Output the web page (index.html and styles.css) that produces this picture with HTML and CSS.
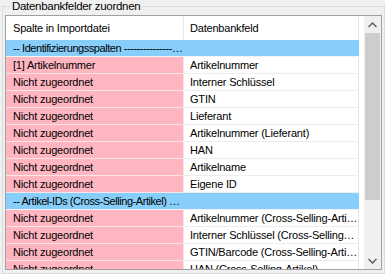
FILE: index.html
```html
<!DOCTYPE html>
<html lang="de">
<head>
    <meta charset="UTF-8">
    <title>Datenbankfelder zuordnen</title>
    <link rel="stylesheet" href="styles.css">
</head>
<body>
    <fieldset class="gruppe">
        <legend>Datenbankfelder zuordnen</legend>
        <div class="raster">
            <div class="tabelle-box">
                <table>
                    <thead>
                        <tr>
                            <th>Spalte in Importdatei</th>
                            <th>Datenbankfeld</th>
                        </tr>
                    </thead>
                    <tbody>
                        <tr class="abschnitt"><td>-- Identifizierungsspalten ----------------------------------------</td><td></td></tr>
                        <tr><td class="quelle">[1] Artikelnummer</td><td>Artikelnummer</td></tr>
                        <tr><td class="quelle">Nicht zugeordnet</td><td>Interner Schlüssel</td></tr>
                        <tr><td class="quelle">Nicht zugeordnet</td><td>GTIN</td></tr>
                        <tr><td class="quelle">Nicht zugeordnet</td><td>Lieferant</td></tr>
                        <tr><td class="quelle">Nicht zugeordnet</td><td>Artikelnummer (Lieferant)</td></tr>
                        <tr><td class="quelle">Nicht zugeordnet</td><td>HAN</td></tr>
                        <tr><td class="quelle">Nicht zugeordnet</td><td>Artikelname</td></tr>
                        <tr><td class="quelle">Nicht zugeordnet</td><td>Eigene ID</td></tr>
                        <tr class="abschnitt"><td>-- Artikel-IDs (Cross-Selling-Artikel) --------------------------</td><td></td></tr>
                        <tr><td class="quelle">Nicht zugeordnet</td><td>Artikelnummer (Cross-Selling-Artikel)</td></tr>
                        <tr><td class="quelle">Nicht zugeordnet</td><td>Interner Schlüssel (Cross-Selling-Artikel)</td></tr>
                        <tr><td class="quelle">Nicht zugeordnet</td><td>GTIN/Barcode (Cross-Selling-Artikel)</td></tr>
                        <tr><td class="quelle">Nicht zugeordnet</td><td>HAN (Cross-Selling-Artikel)</td></tr>
                    </tbody>
                </table>
            </div>
            <div class="scrollleiste">
                <div class="pfeil">
                    <svg width="9" height="6" viewBox="0 0 9 6"><path d="M0.5 5 L4.5 1 L8.5 5" fill="none" stroke="#606060" stroke-width="1.5"/></svg>
                </div>
                <div class="spur">
                    <div class="daumen"></div>
                </div>
                <div class="pfeil">
                    <svg width="9" height="6" viewBox="0 0 9 6"><path d="M0.5 1 L4.5 5 L8.5 1" fill="none" stroke="#606060" stroke-width="1.5"/></svg>
                </div>
            </div>
        </div>
    </fieldset>
</body>
</html>
```

FILE: styles.css
```css
body {
    font-family: "Liberation Sans", Arial, sans-serif;
    font-size: 11px;
    letter-spacing: -0.2px;
    background-color: #f0f0f0;
    color: #000;
    margin: 0;
    padding: 0;
    overflow: hidden;
}
.gruppe {
    margin: 0 1px 0 2px;
    padding: 3px 2px 3px 2px;
    border: 1px solid #dcdcdc;
    border-radius: 0;
}
.gruppe legend {
    padding: 0 2px;
    margin-left: 5px;
    font-size: 11.5px;
    letter-spacing: -0.3px;
    line-height: 12px;
}
.raster {
    display: flex;
    height: 253px;
    border: 1px solid #a0a0a0;
    background-color: #fff;
    overflow: hidden;
}
.tabelle-box {
    flex: 1;
    overflow: hidden;
}
table {
    width: 353px;
    table-layout: fixed;
    border-collapse: collapse;
}
th, td {
    padding: 0 0 0 7px;
    text-align: left;
    font-weight: normal;
    white-space: nowrap;
    overflow: hidden;
    text-overflow: ellipsis;
    border-right: 1px solid #e6e6e6;
    border-bottom: 1px solid #ededed;
    height: 16px;
    line-height: 16px;
}
th {
    height: 24px;
    line-height: 24px;
    border-bottom: 0;
}
th:first-child, td:first-child {
    width: 170px;
}
td + td, th + th {
    padding-left: 6px;
}
.quelle {
    background-color: #ffb6c1;
    border-bottom-color: #fbe4e8;
    border-right-color: #fbe4e8;
}
.abschnitt td {
    background-color: #87cefa;
    border-right-color: #87cefa;
    border-bottom-color: #f3f3f3;
    letter-spacing: -0.45px;
}
.scrollleiste {
    width: 17px;
    margin-left: 4px;
    display: flex;
    flex-direction: column;
    background-color: #f0f0f0;
    border-left: 1px solid #fff;
}
.pfeil {
    height: 17px;
    display: flex;
    align-items: center;
    justify-content: center;
}
.spur {
    flex: 1;
}
.daumen {
    margin: 0 1px;
    height: 167px;
    background-color: #cdcdcd;
}
```
